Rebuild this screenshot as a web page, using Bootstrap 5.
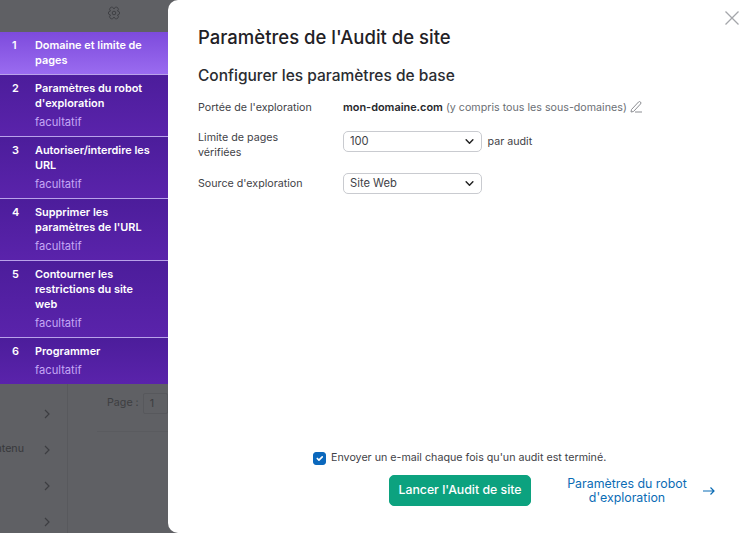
<!DOCTYPE html>
<html lang="fr">
<head>
<meta charset="utf-8">
<title>Audit de site</title>
<link rel="stylesheet" href="https://cdn.jsdelivr.net/npm/bootstrap@5.3.0/dist/css/bootstrap.min.css">
<style>
html,body{height:533px;overflow:hidden}
body{font-family:Inter,"Liberation Sans",sans-serif;background:#5f6064;color:#3f4247;font-size:10.7px}
.shell{height:533px}
.side{width:168px;flex:none;display:flex;flex-direction:column;background:#5f6064}
.side-top{height:32px;display:flex;justify-content:flex-end;padding:6px 47px 0 0;flex:none}
.step{display:flex;padding:6px 14px 0 12px;border-bottom:1px solid #b9a2ea;background:linear-gradient(#4c1d9b,#5a23ab);color:#fff;font-weight:600;line-height:15px;font-size:10.9px}
.step.on{background:linear-gradient(#7d4bdc,#9a6bf0);height:43px}
.step.tall2{height:62px}.step.tall3{height:77px}.step.tall1{height:46px;border-bottom:0}
.num{width:23px;flex:none}
.opt{display:block;color:#c5a7f5;font-weight:400;margin-top:4px;line-height:15px;font-size:11.2px}
.under{flex:1;position:relative;display:flex;min-height:0}
.under-menu{width:68px;flex:none;border-right:1px solid #58595d;display:flex;flex-direction:column;align-items:flex-end;padding:23px 17px 0 0;gap:23px;color:#37383b}
.under-row{height:13px;display:flex;gap:20px;align-items:center}
.pager{margin:8px 0 0 29px;padding:0 0 16px 10px;flex:1;border-bottom:1px solid #5a5b5f;height:40px;color:#3d3e41;display:flex;align-items:center;gap:4px;white-space:nowrap;overflow:hidden}
.pagebox{border:1px solid #57585c;border-radius:2px;width:30px;height:21px;padding-left:6px;line-height:19px}
.pane{flex:1;background:#fff;border-radius:10px 0 0 10px;position:relative;padding:24px 30px 0;display:flex;flex-direction:column;min-width:0}
.closer{position:absolute;top:11px;right:11px;background:none;border:0;padding:0;line-height:0}
h1.ttl{font-size:18.5px;font-weight:500;color:#1f2126;margin:0 0 16px;line-height:26px}
h2.sub{font-size:15.5px;font-weight:500;color:#2a2c31;margin:0 0 14px;line-height:20px}
.frow{display:flex;margin-bottom:13px;line-height:15px}
.frow.first{margin-bottom:16px}
.lab{width:145px;flex:none;padding-right:25px}
.lab-up{margin-top:-1px}
.lab-mid{padding-top:3px}
.sel{width:138.5px;height:21px;font-size:11.2px;line-height:19px;padding:0 24px 0 6px;color:#3f4247;border-color:#c9cbd0;border-radius:5px;background-size:11px 9px;background-position:right 6px center;font-family:inherit;background-image:url("data:image/svg+xml,%3csvg xmlns='http://www.w3.org/2000/svg' viewBox='0 0 16 16'%3e%3cpath fill='none' stroke='%23222' stroke-linecap='round' stroke-linejoin='round' stroke-width='2.6' d='m2 5 6 6 6-6'/%3e%3c/svg%3e")}
.per{margin-left:6px;padding-top:3px}
.quiet{color:#6c6f75}
.dom{color:#26282d;font-weight:600;font-size:10.9px}
.ftr{margin-top:auto;padding-bottom:27px}
.mailchk{margin:0;min-height:0;display:flex;align-items:center;gap:5px;padding:0 0 0 115px;height:16px;margin-bottom:9px}
.mailchk .form-check-input{float:none;margin:0;width:13px;height:13px;background-color:#0b68bd;border-color:#0b68bd;border-radius:3px;flex:none}
.go{background:#0ca27f;border-color:#0ca27f;color:#fff;font-weight:500;font-size:12.3px;height:31px;width:142px;flex:none;padding:0;border-radius:5px}
.nextlink{color:#0b6cb5;font-size:12.4px;line-height:14px;text-align:center;text-decoration:none;width:126px;flex:none}
.actions{padding-left:191px;gap:33px}
.arrow{margin-left:-20px;flex:none}
</style>
</head>
<body>
<div class="shell d-flex">
  <aside class="side">
    <div class="side-top">
      <svg width="14" height="14" viewBox="0 0 14 14" fill="none" stroke="#3f4044" stroke-width="1" aria-hidden="true"><path d="M7 3A2.300 2.300 0 0 1 10.460 1.500 2.300 2.300 0 0 1 10.460 5 2.300 2.300 0 0 1 12.700 7 2.300 2.300 0 0 1 10.460 9 2.300 2.300 0 0 1 10.460 12.500 2.300 2.300 0 0 1 7 11 2.300 2.300 0 0 1 3.540 12.500 2.300 2.300 0 0 1 3.540 9 2.300 2.300 0 0 1 1.300 7 2.300 2.300 0 0 1 3.540 5 2.300 2.300 0 0 1 3.540 1.500 2.300 2.300 0 0 1 7 3z"/><circle cx="7" cy="7" r="1.800"/></svg>
    </div>
    <div class="step on"><span class="num">1</span><span>Domaine et limite de pages</span></div>
    <div class="step tall2"><span class="num">2</span><span>Paramètres du robot d'exploration<span class="opt">facultatif</span></span></div>
    <div class="step tall2"><span class="num">3</span><span>Autoriser/interdire les URL<span class="opt">facultatif</span></span></div>
    <div class="step tall2"><span class="num">4</span><span>Supprimer les paramètres de l'URL<span class="opt">facultatif</span></span></div>
    <div class="step tall3"><span class="num">5</span><span>Contourner les restrictions du site web<span class="opt">facultatif</span></span></div>
    <div class="step tall1"><span class="num">6</span><span>Programmer<span class="opt">facultatif</span></span></div>
    <div class="under">
      <div class="under-menu">
        <div class="under-row"><svg width="6" height="10" viewBox="0 0 6 10" fill="none" stroke="#3d3e42" stroke-width="1.200"><path d="M1 1l4 4-4 4"/></svg></div>
        <div class="under-row"><span>ntenu</span><svg width="6" height="10" viewBox="0 0 6 10" fill="none" stroke="#3d3e42" stroke-width="1.200"><path d="M1 1l4 4-4 4"/></svg></div>
        <div class="under-row"><svg width="6" height="10" viewBox="0 0 6 10" fill="none" stroke="#3d3e42" stroke-width="1.200"><path d="M1 1l4 4-4 4"/></svg></div>
        <div class="under-row"><span class="me-4 pe-3">s</span><svg width="6" height="10" viewBox="0 0 6 10" fill="none" stroke="#3d3e42" stroke-width="1.200"><path d="M1 1l4 4-4 4"/></svg></div>
      </div>
      <div class="pager">Page : <span class="pagebox">1</span></div>
    </div>
  </aside>
  <main class="pane">
    <button class="closer" type="button" aria-label="Fermer"><svg width="14" height="14" viewBox="0 0 14 14" fill="none" stroke="#a4a6aa" stroke-width="1.300"><path d="M.5.500l13 13M13.500.500l-13 13"/></svg></button>
    <h1 class="ttl">Paramètres de l'Audit de site</h1>
    <h2 class="sub">Configurer les paramètres de base</h2>
    <div class="frow first"><div class="lab">Portée de l'exploration</div><div><span class="dom">mon-domaine.com</span> <span class="quiet">(y compris tous les sous-domaines)</span> <svg width="13" height="13" viewBox="0 0 13 13" fill="none" stroke="#8b8d92" stroke-width="1" style="vertical-align:-2px"><path d="M1.500 9.500L8.500 2a1.400 1.400 0 012 2L3.500 11.500l-2.500.500zM5 12h7"/></svg></div></div>
    <div class="frow"><div class="lab lab-up">Limite de pages vérifiées</div><select class="form-select sel" aria-label="Limite"><option>100</option></select><span class="per">par audit</span></div>
    <div class="frow"><div class="lab lab-mid">Source d'exploration</div><select class="form-select sel" aria-label="Source"><option>Site Web</option></select></div>
    <div class="ftr">
      <label class="form-check mailchk"><input class="form-check-input" type="checkbox" checked><span>Envoyer un e-mail chaque fois qu'un audit est terminé.</span></label>
      <div class="d-flex align-items-center actions">
        <button class="btn go" type="button">Lancer l'Audit de site</button>
        <a class="nextlink" href="#">Paramètres du robot d'exploration</a>
        <svg class="arrow" width="12" height="10" viewBox="0 0 12 10" fill="none" stroke="#0b6cb5" stroke-width="1.200"><path d="M0 5h11M7.500 1.500L11 5 7.500 8.500"/></svg>
      </div>
    </div>
  </main>
</div>
<script src="https://cdn.jsdelivr.net/npm/bootstrap@5.3.0/dist/js/bootstrap.bundle.min.js"></script>
</body>
</html>
